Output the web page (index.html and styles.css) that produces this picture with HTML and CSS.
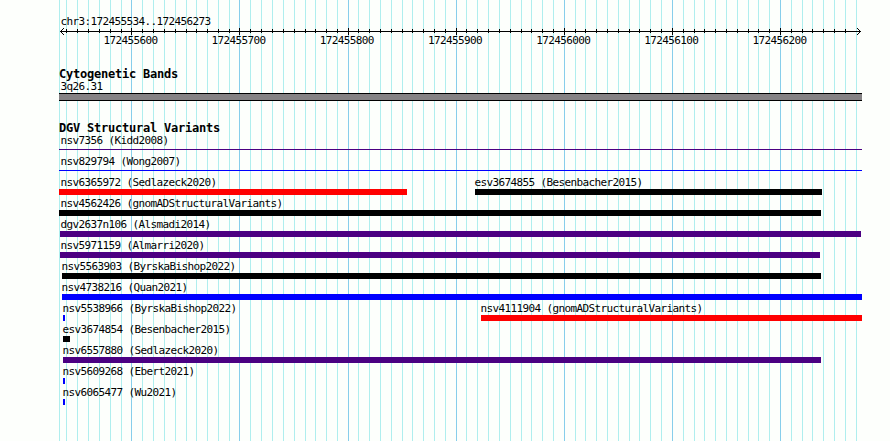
FILE: index.html
```
<!DOCTYPE html>
<html lang="en">
<head>
    <meta charset="UTF-8">
    <title>chr3:172455534..172456273</title>
    <link rel="stylesheet" href="styles.css">
</head>
<body>
    <div class="browser">
        <svg class="grid" width="890" height="441">
            <path class="minor" id="minor" />
            <path class="major" id="major" />
        </svg>

        <div class="panel ruler">
            <div class="label">chr3:172455534..172456273</div>
            <svg class="axis" width="803" height="9">
                <path d="M1 4.5H802" />
                <path d="M2 3.5h1M3 2.5h1M4 1.5h1M2 5.5h1M3 6.5h1M4 7.5h1" />
                <path d="M800 3.5h1M799 2.5h1M798 1.5h1M800 5.5h1M799 6.5h1M798 7.5h1" />
                <path class="ticks" id="ticks" />
            </svg>
            <div class="scale">
                <span>172455600</span>
                <span>172455700</span>
                <span>172455800</span>
                <span>172455900</span>
                <span>172456000</span>
                <span>172456100</span>
                <span>172456200</span>
            </div>
        </div>

        <div class="panel bands">
            <h2>Cytogenetic Bands</h2>
            <div class="label">3q26.31</div>
            <div class="band"></div>
        </div>

        <div class="panel variants">
            <h2>DGV Structural Variants</h2>
            <div class="row">
                <div class="feature"><div class="label">nsv7356 (Kidd2008)</div><div class="line purple" style="width: 803px"></div></div>
            </div>
            <div class="row">
                <div class="feature"><div class="label">nsv829794 (Wong2007)</div><div class="line blue" style="width: 803px"></div></div>
            </div>
            <div class="row">
                <div class="feature"><div class="label">nsv6365972 (Sedlazeck2020)</div><div class="bar red" style="width: 348px"></div></div>
                <div class="feature" style="margin-left: 68px"><div class="label back">esv3674855 (Besenbacher2015)</div><div class="bar black" style="width: 347px"></div></div>
            </div>
            <div class="row">
                <div class="feature"><div class="label">nsv4562426 (gnomADStructuralVariants)</div><div class="bar black" style="width: 762px"></div></div>
            </div>
            <div class="row">
                <div class="feature" style="margin-left: 1px"><div class="label flush">dgv2637n106 (Alsmadi2014)</div><div class="bar purple" style="width: 801px"></div></div>
            </div>
            <div class="row">
                <div class="feature" style="margin-left: 1px"><div class="label flush">nsv5971159 (Almarri2020)</div><div class="bar purple" style="width: 760px"></div></div>
            </div>
            <div class="row">
                <div class="feature" style="margin-left: 3px"><div class="label back">nsv5563903 (ByrskaBishop2022)</div><div class="bar black" style="width: 759px"></div></div>
            </div>
            <div class="row">
                <div class="feature" style="margin-left: 3px"><div class="label back">nsv4738216 (Quan2021)</div><div class="bar blue" style="width: 800px"></div></div>
            </div>
            <div class="row">
                <div class="feature" style="margin-left: 4px; width: 2px"><div class="label back">nsv5538966 (ByrskaBishop2022)</div><div class="bar blue" style="width: 2px"></div></div>
                <div class="feature" style="margin-left: 416px"><div class="label back">nsv4111904 (gnomADStructuralVariants)</div><div class="bar red" style="width: 381px"></div></div>
            </div>
            <div class="row">
                <div class="feature" style="margin-left: 4px"><div class="label back">esv3674854 (Besenbacher2015)</div><div class="bar black" style="width: 7px"></div></div>
            </div>
            <div class="row">
                <div class="feature" style="margin-left: 4px"><div class="label back">nsv6557880 (Sedlazeck2020)</div><div class="bar purple" style="width: 758px"></div></div>
            </div>
            <div class="row">
                <div class="feature" style="margin-left: 4px"><div class="label back">nsv5609268 (Ebert2021)</div><div class="bar blue" style="width: 2px"></div></div>
            </div>
            <div class="row">
                <div class="feature" style="margin-left: 4px"><div class="label back">nsv6065477 (Wu2021)</div><div class="bar blue" style="width: 2px"></div></div>
            </div>
        </div>
    </div>
    <script src="grid.js"></script>
</body>
</html>
```
FILE: styles.css
```
body {
    margin: 0;
    background-color: #fdfffc;
    color: #000;
    font-family: "DejaVu Sans Mono", monospace;
}

.browser {
    position: relative;
    width: 890px;
    height: 441px;
    overflow: hidden;
}

/* vertical guide lines run behind every panel */
.grid {
    position: absolute;
    top: 0;
    left: 0;
    shape-rendering: crispEdges;
}

.grid path {
    fill: none;
    stroke-width: 1;
}

.grid .minor {
    stroke: #afeeee;
}

.grid .major {
    stroke: #87ceeb;
}

.panel {
    position: relative;
    margin-left: 59px;
    width: 803px;
}

.label {
    height: 12px;
    padding-left: 1.4px;
    font-size: 11px;
    line-height: 12px;
    letter-spacing: -0.62px;
    white-space: pre;
}

.label.flush {
    padding-left: 0.4px;
}

.label.back {
    padding-left: 0.4px;
    margin-left: -1px;
}

h2 {
    margin: 0;
    height: 13px;
    font-size: 12px;
    line-height: 13px;
    letter-spacing: -0.22px;
    white-space: pre;
}

.ruler {
    padding-top: 15px;
    height: 53px;
}

.ruler .label {
    height: 11px;
    padding-top: 1px;
}

.axis {
    display: block;
    fill: none;
    stroke: #000;
    shape-rendering: crispEdges;
}

.scale {
    display: flex;
    gap: 54.2px;
    padding-left: 44.4px;
    font-size: 11px;
    line-height: 10px;
    letter-spacing: -0.62px;
}

.scale span {
    width: 54px;
}

.bands {
    height: 54px;
}

.band {
    box-sizing: border-box;
    height: 8px;
    border-top: 1px solid #000;
    border-bottom: 1px solid #000;
    background-color: #858284;
}

.row {
    display: flex;
    height: 21px;
}

.feature {
    flex: none;
}

/* labels may be longer than the feature they name */
.feature .label {
    width: 0;
}

.bar {
    height: 6px;
}

.line {
    height: 1px;
    margin-top: 2px;
}

.purple {
    background-color: #4b0082;
}

.blue {
    background-color: #0000ff;
}

.red {
    background-color: #ff0000;
}

.black {
    background-color: #000;
}
```
FILE: grid.js
```
var left = 59;
var major = [131, 239, 348, 456, 564, 672, 780];
var minor = [66, 77, 88, 99, 110, 121,
    142, 153, 164, 175, 186, 196, 207, 218, 229,
    250, 261, 272, 283, 294, 305, 315, 326, 337,
    358, 369, 380, 391, 402, 412, 423, 434, 445,
    466, 477, 488, 499, 510, 521, 531, 542, 553,
    575, 585, 596, 607, 618, 629, 639, 650, 661,
    683, 694, 704, 715, 726, 737, 748, 758, 769,
    791, 802, 812, 823, 834, 845, 856];

function lines(xs, offset, top, bottom) {
    return xs.map(function (x) {
        return "M" + (x - offset + 0.5) + " " + top + "V" + bottom;
    }).join("");
}

document.getElementById("minor").setAttribute("d", lines([left].concat(minor), 0, 0, 441));
document.getElementById("major").setAttribute("d", lines(major, 0, 0, 441));
document.getElementById("ticks").setAttribute("d", lines(minor.slice(0, -1), left, 2, 6) + lines(major, left, 1, 8));
```
